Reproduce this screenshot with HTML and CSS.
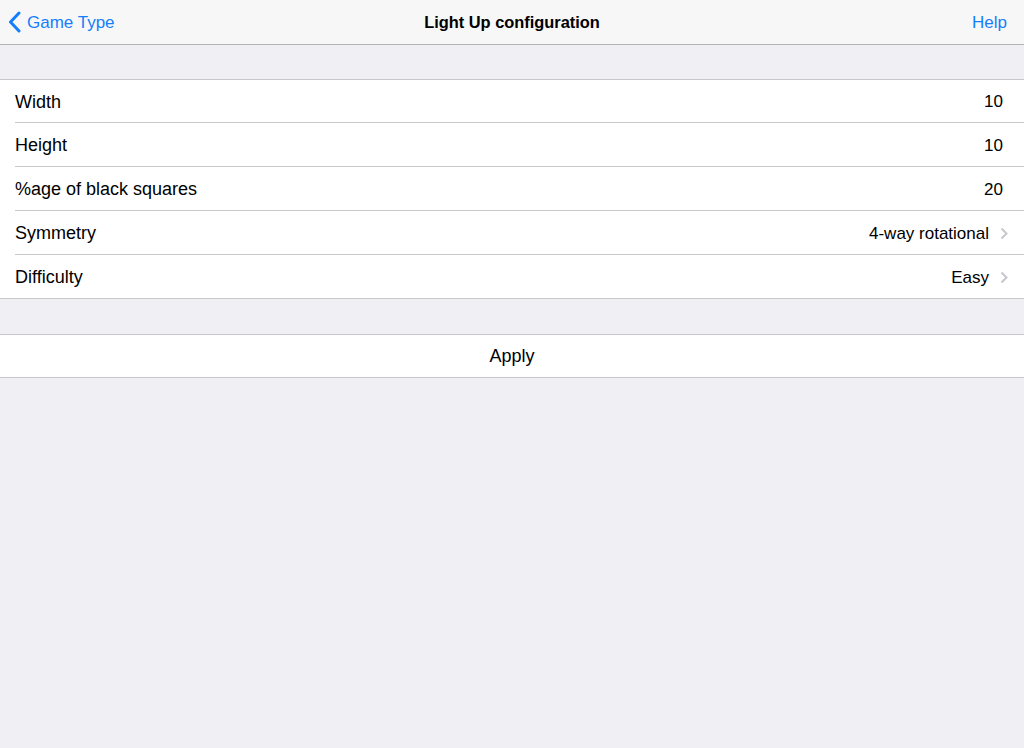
FILE: index.html
```html
<!DOCTYPE html>
<html>
<head>
<meta charset="utf-8">
<link rel="stylesheet" href="styles.css">
</head>
<body>
<div class="navbar">
  <div class="nav-left">
    <svg class="back" width="13" height="22" viewBox="0 0 13 22"><path d="M11 2 L2.5 11 L11 20" fill="none" stroke="#157efb" stroke-width="3" stroke-linecap="round" stroke-linejoin="round"/></svg>
    <span class="nav-text">Game Type</span>
  </div>
  <div class="nav-title">Light Up configuration</div>
  <div class="nav-right"><span class="nav-text">Help</span></div>
</div>
<div class="section">
  <div class="row first"><span class="label">Width</span><span class="value">10</span></div>
  <div class="row"><span class="label">Height</span><span class="value">10</span></div>
  <div class="row"><span class="label">%age of black squares</span><span class="value">20</span></div>
  <div class="row"><span class="label">Symmetry</span><span class="value chev">4-way rotational<svg class="chevron" width="8" height="13" viewBox="0 0 8 13"><path d="M1.5 1.5 L6.5 6.5 L1.5 11.5" fill="none" stroke="#c7c7cc" stroke-width="2"/></svg></span></div>
  <div class="row last"><span class="label">Difficulty</span><span class="value chev">Easy<svg class="chevron" width="8" height="13" viewBox="0 0 8 13"><path d="M1.5 1.5 L6.5 6.5 L1.5 11.5" fill="none" stroke="#c7c7cc" stroke-width="2"/></svg></span></div>
</div>
<div class="section apply-section">
  <div class="row apply">Apply</div>
</div>
</body>
</html>
```
FILE: styles.css
```css
html, body {
  margin: 0;
  padding: 0;
}
body {
  background: #efeff4;
  font-family: "Liberation Sans", Arial, sans-serif;
  color: #000;
  width: 1024px;
  height: 748px;
  overflow: hidden;
}
.navbar {
  height: 44px;
  background: #f7f7f7;
  border-bottom: 1px solid #b2b2b2;
  display: flex;
  align-items: center;
  justify-content: space-between;
  position: relative;
}
.nav-left {
  display: flex;
  align-items: center;
  color: #157efb;
  font-size: 17px;
  padding-left: 8px;
  gap: 6px;
}
.nav-text {
  padding-top: 2px;
}
.nav-title {
  font-weight: bold;
  font-size: 16.4px;
  position: absolute;
  left: 0;
  right: 0;
  text-align: center;
  pointer-events: none;
}
.nav-right {
  display: flex;
  align-items: center;
  color: #157efb;
  font-size: 17px;
  padding-right: 17px;
}
.section {
  margin-top: 34px;
  background: #fff;
  border-top: 1px solid #c8c7cc;
  border-bottom: 1px solid #c8c7cc;
}
.apply-section {
  margin-top: 35px;
}
.row {
  box-sizing: border-box;
  height: 44px;
  padding-top: 2px;
  margin-left: 15px;
  padding-right: 21px;
  display: flex;
  align-items: center;
  justify-content: space-between;
  border-bottom: 1px solid #c8c7cc;
  font-size: 18px;
}
.row.first {
  height: 43px;
}
.row.last {
  border-bottom: none;
  height: 43px;
}
.value {
  font-size: 17px;
  display: flex;
  align-items: center;
}
.value.chev {
  margin-right: -5px;
}
.chevron {
  margin-left: 11px;
}
.apply {
  margin-left: 0;
  padding-right: 0;
  padding-top: 1px;
  justify-content: center;
  border-bottom: none;
  height: 42px;
}
```
